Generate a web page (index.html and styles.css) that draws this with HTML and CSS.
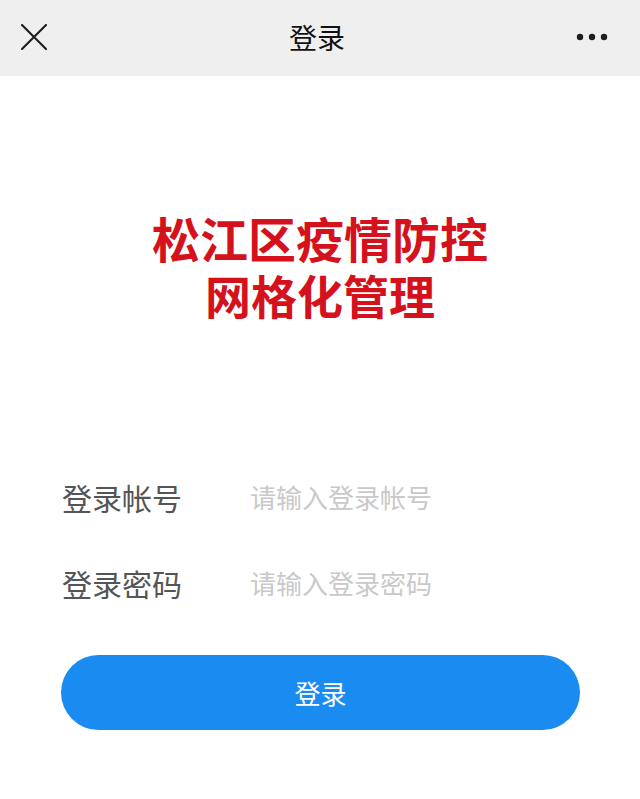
FILE: index.html
```html
<!DOCTYPE html>
<html lang="zh-CN">
<head>
<meta charset="utf-8">
<title>登录</title>
<link rel="stylesheet" href="styles.css">
</head>
<body>
<div class="page">
  <header class="topbar">
    <span class="icon-close">
      <svg width="26" height="26" viewBox="0 0 26 26"><path d="M1 1 L25 25 M25 1 L1 25" stroke="#1e1e1e" stroke-width="2.1" stroke-linecap="round" fill="none"/></svg>
    </span>
    <h1 class="topbar-title">登录</h1>
    <span class="icon-more">
      <svg width="32" height="8" viewBox="0 0 32 8"><circle cx="4" cy="4" r="3.2" fill="#1e1e1e"/><circle cx="16" cy="4" r="3.2" fill="#1e1e1e"/><circle cx="28" cy="4" r="3.2" fill="#1e1e1e"/></svg>
    </span>
  </header>
  <main class="content">
    <div class="brand">
      <div class="brand-line">松江区疫情防控</div>
      <div class="brand-line brand-line-2">网格化管理</div>
    </div>
    <form class="form">
      <div class="row">
        <label class="label">登录帐号</label>
        <input class="input" type="text" placeholder="请输入登录帐号">
      </div>
      <div class="row">
        <label class="label">登录密码</label>
        <input class="input" type="password" placeholder="请输入登录密码">
      </div>
      <button class="btn" type="button">登录</button>
    </form>
  </main>
</div>
</body>
</html>
```
FILE: styles.css
```css
* { box-sizing: border-box; }
html, body { margin: 0; padding: 0; background: #fff; }
body {
  font-family: "Noto Sans CJK SC", "Noto Sans", sans-serif;
  width: 640px;
  height: 799px;
  overflow: hidden;
}
.page { display: flex; flex-direction: column; height: 799px; }
.topbar {
  height: 76px;
  background: #efefef;
  display: grid;
  grid-template-columns: 1fr auto 1fr;
  align-items: center;
  padding: 0 32px 0 21px;
}
.icon-close { display: flex; width: 26px; height: 26px; margin-top: -2px; justify-self: start; }
.icon-more { display: flex; width: 32px; height: 8px; margin-top: -3px; justify-self: end; }
.topbar-title {
  margin: 0 0 0 5px;
  font-size: 28px;
  font-weight: 400;
  color: #111;
  line-height: 1;
  margin-top: -2px;
}
.content { display: flex; flex-direction: column; }
.brand {
  margin-top: 137px;
  display: flex;
  flex-direction: column;
  align-items: center;
  gap: 9px;
  color: #d5121c;
  font-weight: 700;
}
.brand-line { white-space: nowrap; font-size: 48px; line-height: 48px; height: 48px; }
.brand-line-2 { font-size: 46px; }
.form { margin-top: 137px; display: flex; flex-direction: column; }
.row {
  height: 86px;
  display: flex;
  align-items: center;
  padding-left: 62px;
}
.label {
  width: 188px;
  font-size: 30px;
  color: #555;
  line-height: 1;
  margin-top: -3px;
}
.input {
  border: none;
  outline: none;
  background: transparent;
  font-family: inherit;
  font-size: 26px;
  color: #333;
  padding: 0;
  width: 300px;
  line-height: 1;
  margin-top: -3px;
}
.input::placeholder { color: #c9c9c9; }
.btn {
  margin: 28px 0 0 61px;
  width: 519px;
  height: 75px;
  border: none;
  border-radius: 38px;
  background: #1a8bf1;
  color: #fff;
  font-family: inherit;
  font-size: 26px;
  line-height: 1;
  padding: 0;
}
```
